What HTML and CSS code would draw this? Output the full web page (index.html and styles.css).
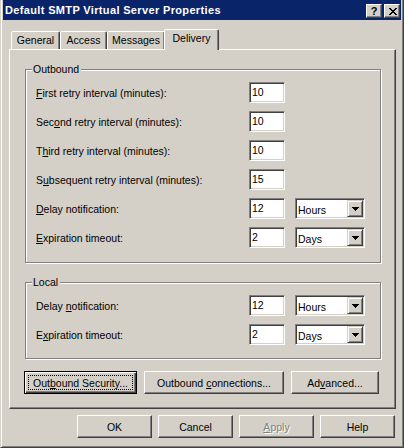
FILE: index.html
```html
<!DOCTYPE html>
<html>
<head>
<meta charset="utf-8">
<link rel="stylesheet" href="styles.css">
</head>
<body>
<div class="window">
  <div class="titlebar">
    <span class="title">Default SMTP Virtual Server Properties</span>
    <div class="caption-btns">
      <span class="cbtn cbtn-help">?</span>
      <span class="cbtn cbtn-close">
        <svg width="8" height="7" viewBox="0 0 8 7" shape-rendering="crispEdges"><path d="M0 0h2v1H0zM6 0h2v1H6zM1 1h2v1H1zM5 1h2v1H5zM2 2h4v1H2zM3 3h2v1H3zM2 4h4v1H2zM1 5h2v1H1zM5 5h2v1H5zM0 6h2v1H0zM6 6h2v1H6z" fill="#000"/></svg>
      </span>
    </div>
  </div>
  <div class="client">
    <div class="tabs">
      <div class="tab tab-general">General</div>
      <div class="tab tab-access">Access</div>
      <div class="tab tab-messages">Messages</div>
      <div class="tab tab-delivery selected">Delivery</div>
    </div>
    <div class="panel">
      <div class="group group-outbound">
        <span class="legend">Outbound</span>
        <div class="row"><label class="lbl"><u>F</u>irst retry interval (minutes):</label><input class="edit" type="text" value="10"></div>
        <div class="row"><label class="lbl">Sec<u>o</u>nd retry interval (minutes):</label><input class="edit" type="text" value="10"></div>
        <div class="row"><label class="lbl">T<u>h</u>ird retry interval (minutes):</label><input class="edit" type="text" value="10"></div>
        <div class="row"><label class="lbl">S<u>u</u>bsequent retry interval (minutes):</label><input class="edit" type="text" value="15"></div>
        <div class="row"><label class="lbl"><u>D</u>elay notification:</label><input class="edit" type="text" value="12"><div class="combo"><span class="combo-text">Hours</span><span class="combo-btn"><svg width="7" height="4" viewBox="0 0 7 4" shape-rendering="crispEdges"><path d="M0 0h7v1H0zM1 1h5v1H1zM2 2h3v1H2zM3 3h1v1H3z" fill="#000"/></svg></span></div></div>
        <div class="row"><label class="lbl"><u>E</u>xpiration timeout:</label><input class="edit" type="text" value="2"><div class="combo"><span class="combo-text">Days</span><span class="combo-btn"><svg width="7" height="4" viewBox="0 0 7 4" shape-rendering="crispEdges"><path d="M0 0h7v1H0zM1 1h5v1H1zM2 2h3v1H2zM3 3h1v1H3z" fill="#000"/></svg></span></div></div>
      </div>
      <div class="group group-local">
        <span class="legend">Local</span>
        <div class="row"><label class="lbl">Delay <u>n</u>otification:</label><input class="edit" type="text" value="12"><div class="combo"><span class="combo-text">Hours</span><span class="combo-btn"><svg width="7" height="4" viewBox="0 0 7 4" shape-rendering="crispEdges"><path d="M0 0h7v1H0zM1 1h5v1H1zM2 2h3v1H2zM3 3h1v1H3z" fill="#000"/></svg></span></div></div>
        <div class="row"><label class="lbl">E<u>x</u>piration timeout:</label><input class="edit" type="text" value="2"><div class="combo"><span class="combo-text">Days</span><span class="combo-btn"><svg width="7" height="4" viewBox="0 0 7 4" shape-rendering="crispEdges"><path d="M0 0h7v1H0zM1 1h5v1H1zM2 2h3v1H2zM3 3h1v1H3z" fill="#000"/></svg></span></div></div>
      </div>
      <div class="btnrow">
        <button class="btn btn-default btn-security">Out<u>b</u>ound Security...</button>
        <button class="btn btn-connections">Outbound <u>c</u>onnections...</button>
        <button class="btn btn-advanced">Ad<u>v</u>anced...</button>
      </div>
    </div>
    <div class="dlg-buttons">
      <button class="btn btn-dlg">OK</button>
      <button class="btn btn-dlg">Cancel</button>
      <button class="btn btn-dlg btn-disabled"><u>A</u>pply</button>
      <button class="btn btn-dlg">Help</button>
    </div>
  </div>
</div>
</body>
</html>
```
FILE: styles.css
```css
* { box-sizing: border-box; }
html, body { margin: 0; padding: 0; }
body {
  width: 404px;
  height: 448px;
  overflow: hidden;
  background: #d4d0c8;
  font-family: "Liberation Sans", Arial, sans-serif;
  font-size: 10.5px;
  color: #000;
}
u { text-decoration: underline; text-underline-offset: 1px; }

.window {
  width: 404px;
  height: 448px;
  background: #d4d0c8;
  border: 1px solid;
  border-top: 0;
  border-color: #d4d0c8 #404040 #404040 #d4d0c8;
  box-shadow: inset 1px 0 #fff, inset -1px -1px #808080;
  padding: 0 2px 2px 2px;
  display: flex;
  flex-direction: column;
}

.titlebar {
  height: 20px;
  flex: 0 0 20px;
  background: #0a246a;
  display: flex;
  justify-content: space-between;
  align-items: flex-start;
  padding: 0 1px 0 2px;
}
.title {
  color: #fff;
  font-weight: bold;
  font-size: 11px;
  letter-spacing: 0.35px;
  line-height: 21px;
  white-space: nowrap;
}
.caption-btns { display: flex; gap: 2px; margin-top: 4px; }
.cbtn {
  width: 16px;
  height: 14px;
  background: #d4d0c8;
  border: 1px solid;
  border-color: #fff #404040 #404040 #fff;
  box-shadow: inset -1px -1px #808080;
  display: flex;
  align-items: center;
  justify-content: center;
  font-weight: bold;
  font-size: 11px;
  line-height: 12px;
}
.cbtn-close svg { display: block; margin-left: 1px; }

.client {
  flex: 1;
  display: flex;
  flex-direction: column;
  padding-top: 9px;
}

.tabs {
  display: flex;
  align-items: flex-end;
  height: 20px;
  margin-left: 8px;
}
.tab {
  height: 18px;
  background: #d4d0c8;
  border: 1px solid;
  border-bottom: 0;
  border-color: #fff #404040 transparent #fff;
  box-shadow: inset -1px 0 #808080;
  border-radius: 2px 2px 0 0;
  text-align: center;
  line-height: 16px;
  white-space: nowrap;
}
.tab-general { width: 49px; }
.tab-access { width: 47px; }
.tab-messages { width: 58px; }
.tab-delivery { width: 55px; }
.tab.selected {
  height: 21px;
  margin-bottom: -1px;
  margin-left: -1px;
  position: relative;
  z-index: 1;
  line-height: 16px;
}

.panel {
  margin-left: 6px;
  width: 387px;
  height: 360px;
  flex: 0 0 360px;
  border: 1px solid;
  border-color: #fff #404040 #404040 #fff;
  box-shadow: inset -1px -1px #808080;
  padding: 19px 14px 0 15px;
  display: flex;
  flex-direction: column;
}

.group {
  position: relative;
  border: 1px solid #808080;
  box-shadow: inset 1px 1px #fff, 1px 1px #fff;
  padding: 12px 0 14px 10px;
  display: flex;
  flex-direction: column;
  gap: 8px;
}
.group-local { margin-top: 19px; padding-bottom: 13px; }
.legend {
  position: absolute;
  top: -7px;
  left: 6px;
  padding: 0 2px 0 1px;
  background: #d4d0c8;
  line-height: 13px;
}

.row {
  display: flex;
  align-items: center;
  height: 21px;
}
.lbl { width: 213px; flex: 0 0 213px; white-space: nowrap; }

.edit {
  width: 36px;
  height: 21px;
  margin: 0;
  padding: 0 0 2px 2px;
  border: 1px solid;
  border-color: #808080 #fff #fff #808080;
  box-shadow: inset 1px 1px #404040, inset -1px -1px #d4d0c8;
  background: #fff;
  font: inherit;
  color: #000;
  outline: none;
}

.combo {
  margin-left: 10px;
  width: 70px;
  height: 21px;
  border: 1px solid;
  border-color: #808080 #fff #fff #808080;
  box-shadow: inset 1px 1px #404040, inset -1px -1px #d4d0c8;
  background: #fff;
  padding: 1px;
  display: flex;
  align-items: center;
  justify-content: space-between;
}
.combo-text { padding: 2px 0 0 1px; }
.combo-btn {
  width: 16px;
  height: 17px;
  background: #d4d0c8;
  border: 1px solid;
  border-color: #d4d0c8 #404040 #404040 #d4d0c8;
  box-shadow: inset 1px 1px #fff, inset -1px -1px #808080;
  display: flex;
  align-items: center;
  justify-content: center;
  padding-top: 1px;
}
.combo-btn svg { display: block; }

.btn {
  height: 23px;
  margin: 0;
  padding: 0;
  background: #d4d0c8;
  border: 1px solid;
  border-color: #fff #404040 #404040 #fff;
  box-shadow: inset -1px -1px #808080;
  font: inherit;
  color: #000;
  text-align: center;
  white-space: nowrap;
}
.btn-default {
  border-color: #000;
  box-shadow: inset 1px 1px #fff, inset -1px -1px #404040, inset -2px -2px #808080;
  outline: 1px dotted #000;
  outline-offset: -5px;
}
.btn-disabled { color: #808080; text-shadow: 1px 1px #fff; }

.btnrow {
  display: flex;
  gap: 7px;
  margin-top: 12px;
  margin-left: -1px;
}
.btn-security { width: 113px; }
.btn-connections { width: 140px; }
.btn-advanced { width: 88px; }

.dlg-buttons {
  display: flex;
  justify-content: flex-end;
  gap: 6px;
  margin-top: 6px;
  margin-right: 6px;
}
.btn-dlg { width: 75px; }
```
